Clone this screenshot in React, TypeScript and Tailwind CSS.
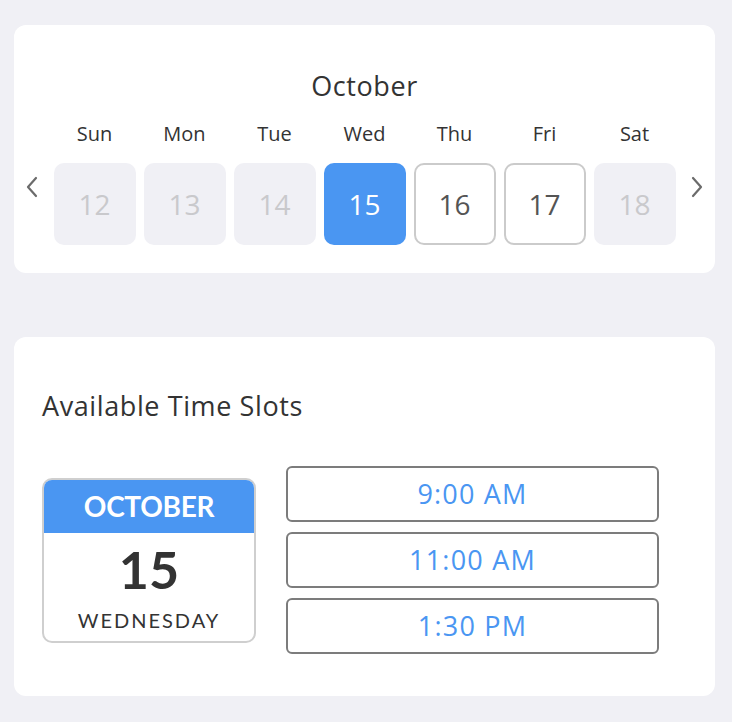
import React from 'react';

const days = [
  { name: 'Sun', num: 12, state: 'off' },
  { name: 'Mon', num: 13, state: 'off' },
  { name: 'Tue', num: 14, state: 'off' },
  { name: 'Wed', num: 15, state: 'on' },
  { name: 'Thu', num: 16, state: 'open' },
  { name: 'Fri', num: 17, state: 'open' },
  { name: 'Sat', num: 18, state: 'off' },
];

const slots = ['9:00 AM', '11:00 AM', '1:30 PM'];

const Chevron = ({ dir }: { dir: 'left' | 'right' }) => (
  <svg width="14" height="22" viewBox="0 0 14 22" className="text-[#6b6b6b]">
    <path
      d={dir === 'left' ? 'M11 2 L3 11 L11 20' : 'M3 2 L11 11 L3 20'}
      fill="none"
      stroke="currentColor"
      strokeWidth="2.2"
      strokeLinecap="round"
      strokeLinejoin="round"
    />
  </svg>
);

const DayBox = ({ num, state }: { num: number; state: string }) => {
  const cls =
    state === 'on'
      ? 'bg-[#4a96f2] text-white'
      : state === 'open'
      ? 'bg-white border-2 border-[#cbcbcb] text-[#545454]'
      : 'bg-[#f0f0f5] text-[#c9c9cc]';
  return (
    <div className={`w-[82px] h-[82px] rounded-[10px] flex items-center justify-center text-[28px] ${cls}`}>
      {num}
    </div>
  );
};

export default function App() {
  return (
    <div className="min-h-[722px] bg-[#f0f0f5] px-[14px] pt-[25px] pb-[26px] font-['Open_Sans','Noto_Sans',sans-serif] text-[#333]">
      <div className="w-[701px] bg-white rounded-[12px] h-[248px] flex flex-col items-center pt-[43px]">
        <div className="text-[27px] leading-[36px] tracking-[0.6px] text-[#333]">October</div>
        <div className="flex items-center mt-[17px]">
          <div className="w-[39px] flex justify-center pt-[8px] -ml-[8px] mr-[2px]">
            <Chevron dir="left" />
          </div>
          <div className="flex gap-[8px]">
            {days.map((d) => (
              <div key={d.name} className="flex flex-col items-center">
                <div className="text-[20px] leading-[26px] mb-[16px] text-[#333]">{d.name}</div>
                <DayBox num={d.num} state={d.state} />
              </div>
            ))}
          </div>
          <div className="w-[39px] flex justify-center pt-[8px] -mr-[8px] ml-[2px]">
            <Chevron dir="right" />
          </div>
        </div>
      </div>

      <div className="w-[701px] bg-white rounded-[12px] mt-[64px] h-[359px] pl-[28px] pt-[52px]">
        <div className="text-[27px] leading-[34px] tracking-[0.6px] text-[#333]">Available Time Slots</div>
        <div className="flex items-center gap-[30px] mt-[43px]">
          <div className="w-[214px] h-[165px] rounded-[10px] border-2 border-[#cfcfcf] overflow-hidden flex flex-col font-['Lato',sans-serif]">
            <div className="bg-[#4a96f2] h-[53px] flex items-center justify-center text-white font-bold text-[28px] tracking-[-0.3px]">
              OCTOBER
            </div>
            <div className="flex-1 flex flex-col items-center pt-[8px]">
              <div className="text-[52px] leading-[56px] font-bold text-[#333]">15</div>
              <div className="text-[20px] leading-[26px] tracking-[2px] text-[#333] mt-[10px]">WEDNESDAY</div>
            </div>
          </div>
          <div className="flex flex-col gap-[10px]">
            {slots.map((s) => (
              <div
                key={s}
                className="w-[373px] h-[56px] rounded-[6px] border-2 border-[#7c7c7c] flex items-center justify-center text-[27px] tracking-[1.2px] text-[#4a96f2]"
              >
                {s}
              </div>
            ))}
          </div>
        </div>
      </div>
    </div>
  );
}
